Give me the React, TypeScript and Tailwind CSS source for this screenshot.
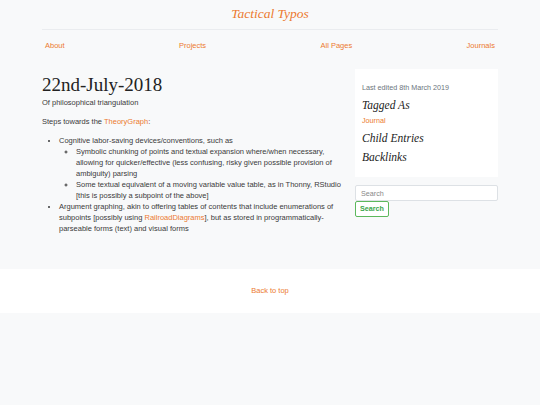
import React from 'react';

const orange = 'text-[#ec7a30]';

export default function App() {
    return (
        <div className="min-h-[405px] bg-[#f8f9fa] font-['Liberation_Sans',Arial,sans-serif] text-[#3a3a3a]">
            {/* Header */}
            <header className="mx-auto w-[456px]">
                <div className={`pt-[6px] pb-[7px] text-center font-['Liberation_Serif',serif] italic text-[13.5px] leading-[16px] ${orange}`}>
                    Tactical Typos
                </div>
                <div className="border-t border-[#eaecef]"></div>
                <nav className={`flex justify-between px-[3px] pt-[11px] text-[7.5px] leading-[10px] ${orange}`}>
                    <a>About</a>
                    <a>Projects</a>
                    <a>All Pages</a>
                    <a>Journals</a>
                </nav>
            </header>

            {/* Content */}
            <main className="mx-auto mt-[18px] grid w-[456px] grid-cols-[300px_143px] gap-x-[13px] pb-[35px] items-start">
                <article className="text-[7.5px] leading-[11px]">
                    <h1 className="mt-[5px] font-['Liberation_Serif',serif] text-[19px] leading-[22px] text-[#222]">22nd-July-2018</h1>
                    <p className="mt-[1px]">Of philosophical triangulation</p>
                    <p className="mt-[8px]">Steps towards the <a className={orange}>TheoryGraph</a>:</p>
                    <ul className="mt-[8px] list-disc pl-[17px]">
                        <li>
                            Cognitive labor-saving devices/conventions, such as
                            <ul className="list-[circle] pl-[17px]">
                                <li>Symbolic chunking of points and textual expansion where/when necessary, allowing for quicker/effective (less confusing, risky given possible provision of ambiguity) parsing</li>
                                <li>Some textual equivalent of a moving variable value table, as in Thonny, RStudio [this is possibly a subpoint of the above]</li>
                            </ul>
                        </li>
                        <li>
                            Argument graphing, akin to offering tables of contents that include enumerations of subpoints [possibly using <a className={orange}>RailroadDiagrams</a>], but as stored in programmatically-parseable forms (text) and visual forms
                        </li>
                    </ul>
                </article>

                <aside>
                    <div className="bg-white px-[7px] pt-[13px] pb-[13px]">
                        <p className="text-[7.2px] leading-[11px] text-[#6c757d]">Last edited 8th March 2019</p>
                        <h3 className="mt-[6px] font-['Liberation_Serif',serif] italic text-[11.5px] leading-[13px] text-[#222]">Tagged As</h3>
                        <a className={`mt-[3px] block text-[7.2px] leading-[11px] ${orange}`}>Journal</a>
                        <h3 className="mt-[6px] font-['Liberation_Serif',serif] italic text-[11.5px] leading-[13px] text-[#222]">Child Entries</h3>
                        <h3 className="mt-[6px] font-['Liberation_Serif',serif] italic text-[11.5px] leading-[13px] text-[#222]">Backlinks</h3>
                    </div>
                    <input
                        placeholder="Search"
                        className="mt-[8px] block h-[16px] w-full rounded-[2px] border border-[#dde1e5] bg-white px-[5px] text-[7.2px] text-[#333] placeholder:text-[#888]"
                    />
                    <button className="block h-[16px] w-[34px] rounded-[2px] border border-[#5cb85c] bg-white text-[7.2px] font-bold text-[#3aa54a]">
                        Search
                    </button>
                </aside>
            </main>

            {/* Footer */}
            <footer className="flex h-[44px] items-center justify-center bg-white">
                <a className={`text-[7.5px] ${orange}`}>Back to top</a>
            </footer>
        </div>
    );
}
